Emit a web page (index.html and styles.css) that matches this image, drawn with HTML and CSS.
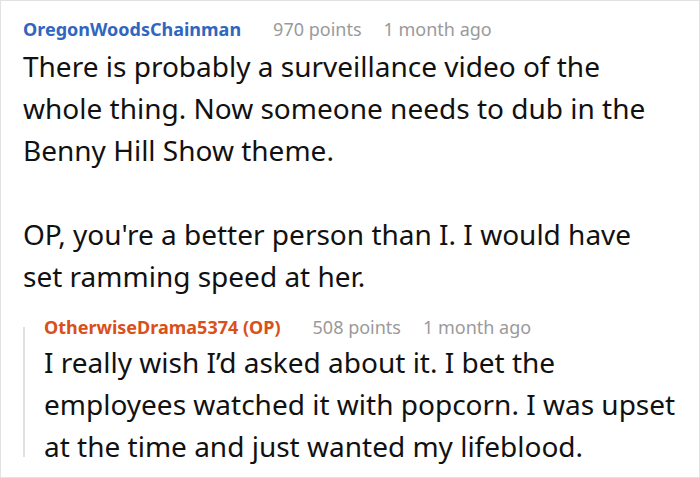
FILE: index.html
```html
<!DOCTYPE html>
<html>
<head>
<meta charset="utf-8">
<link rel="stylesheet" href="styles.css">
</head>
<body>
<div class="page">
  <div class="comment">
    <div class="meta">
      <span class="author author-blue">OregonWoodsChainman</span>
      <span class="points">970 points</span>
      <span class="date">1 month ago</span>
    </div>
    <div class="text">There is probably a surveillance video of the whole thing. Now someone needs to dub in the Benny Hill Show theme.<br><br>OP, you're a better person than I. I would have set ramming speed at her.</div>
  </div>
  <div class="reply">
    <div class="bar"></div>
    <div class="reply-body">
      <div class="meta">
        <span class="author author-op">OtherwiseDrama5374 (OP)</span>
        <span class="points">508 points</span>
        <span class="date">1 month ago</span>
      </div>
      <div class="text">I really wish I’d asked about it. I bet the employees watched it with popcorn. I was upset at the time and just wanted my lifeblood.</div>
    </div>
  </div>
</div>
</body>
</html>
```

FILE: styles.css
```css
html, body {
  margin: 0;
  padding: 0;
  background: #fff;
}

.page {
  width: 700px;
  height: 478px;
  box-sizing: border-box;
  border: 1px solid #e2e2e2;
  padding: 16px 22px 0 22px;
  font-family: "Noto Sans", "Open Sans", sans-serif;
  color: #111;
  overflow: hidden;
}

.meta {
  display: flex;
  align-items: baseline;
  font-size: 18px;
  line-height: 24px;
}

.author {
  font-weight: 700;
}

.author-blue {
  color: #3066c0;
}

.author-op {
  color: #d9501b;
}

.points {
  color: #9a9a9a;
  margin-left: 32px;
}

.date {
  color: #9a9a9a;
  margin-left: 22px;
}

.text {
  font-size: 28px;
  line-height: 42px;
  margin-top: 4px;
}

.reply {
  display: flex;
  margin-top: 18px;
}

.bar {
  width: 2px;
  background: #e0e0e0;
  margin-top: 12px;
  margin-bottom: 10px;
  flex-shrink: 0;
}

.reply-body {
  margin-left: 19px;
  flex: 1;
}

.reply-body .text {
  margin-top: 2px;
}
```
